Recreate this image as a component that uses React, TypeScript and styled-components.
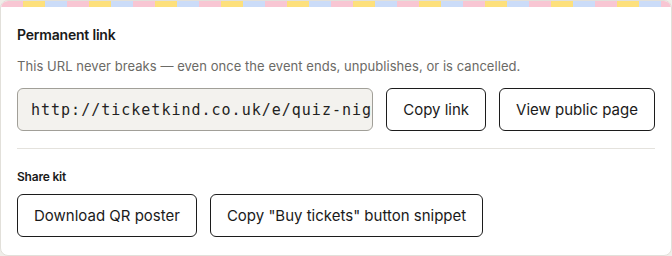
import React from "react";
import styled, { createGlobalStyle } from "styled-components";

const Global = createGlobalStyle`
  html, body { margin: 0; padding: 0; background: #efeee9; }
  body { font-family: Inter, "Liberation Sans", sans-serif; color: #1a1a1a; }
`;

const Card = styled.section`
  width: 672px;
  height: 256px;
  box-sizing: border-box;
  background: #ffffff;
  border: 1px solid #e2e0da;
  border-radius: 8px;
  overflow: hidden;
  display: flex;
  flex-direction: column;
`;

const Stripe = styled.div`
  height: 6px;
  flex: none;
  background: repeating-linear-gradient(
    90deg,
    #f8c6d3 0 22px,
    #fde07c 22px 44px,
    #cbdcf8 44px 66px
  );
`;

const Body = styled.div`
  padding: 18px 16px 16px;
  display: flex;
  flex-direction: column;
`;

const Title = styled.h2`
  margin: 0;
  font-size: 14px;
  line-height: 20px;
  font-weight: 600;
  letter-spacing: -0.2px;
`;

const Desc = styled.p`
  margin: 12px 0 0;
  font-size: 13px;
  line-height: 18px;
  letter-spacing: 0.05px;
  color: #6b6a66;
`;

const Row = styled.div`
  display: flex;
  gap: 13px;
  margin-top: 13px;
`;

const UrlBox = styled.div`
  flex: 1 1 auto;
  min-width: 0;
  box-sizing: border-box;
  height: 43px;
  padding: 0 13px;
  display: flex;
  align-items: center;
  background: #f3f2ee;
  border: 1px solid #a19f98;
  border-radius: 6px;
  overflow: hidden;
  white-space: nowrap;
  font-family: "DejaVu Sans Mono", "Liberation Mono", monospace;
  font-size: 15px;
  letter-spacing: 1px;
  color: #222;
`;

const Button = styled.button`
  flex: none;
  box-sizing: border-box;
  height: 43px;
  padding: 0 16px;
  background: #fff;
  border: 1px solid #1c1c1c;
  border-radius: 6px;
  font-family: inherit;
  font-size: 15px;
  letter-spacing: 0;
  color: #1a1a1a;
  white-space: nowrap;
  cursor: pointer;
`;

const Divider = styled.hr`
  margin: 17px 0 0;
  border: none;
  border-top: 1px solid #e4e2dd;
`;

const SubTitle = styled.h3`
  margin: 20px 0 0;
  font-size: 12px;
  line-height: 16px;
  font-weight: 600;
  letter-spacing: -0.2px;
`;

const KitRow = styled(Row)`
  margin-top: 9px;
`;

export default function App() {
  return (
    <>
      <Global />
      <Card>
        <Stripe />
        <Body>
          <Title>Permanent link</Title>
          <Desc>
            This URL never breaks — even once the event ends, unpublishes, or is cancelled.
          </Desc>
          <Row>
            <UrlBox>http://ticketkind.co.uk/e/quiz-night-at-the-crown</UrlBox>
            <Button>Copy link</Button>
            <Button>View public page</Button>
          </Row>
          <Divider />
          <SubTitle>Share kit</SubTitle>
          <KitRow>
            <Button>Download QR poster</Button>
            <Button>Copy "Buy tickets" button snippet</Button>
          </KitRow>
        </Body>
      </Card>
    </>
  );
}
